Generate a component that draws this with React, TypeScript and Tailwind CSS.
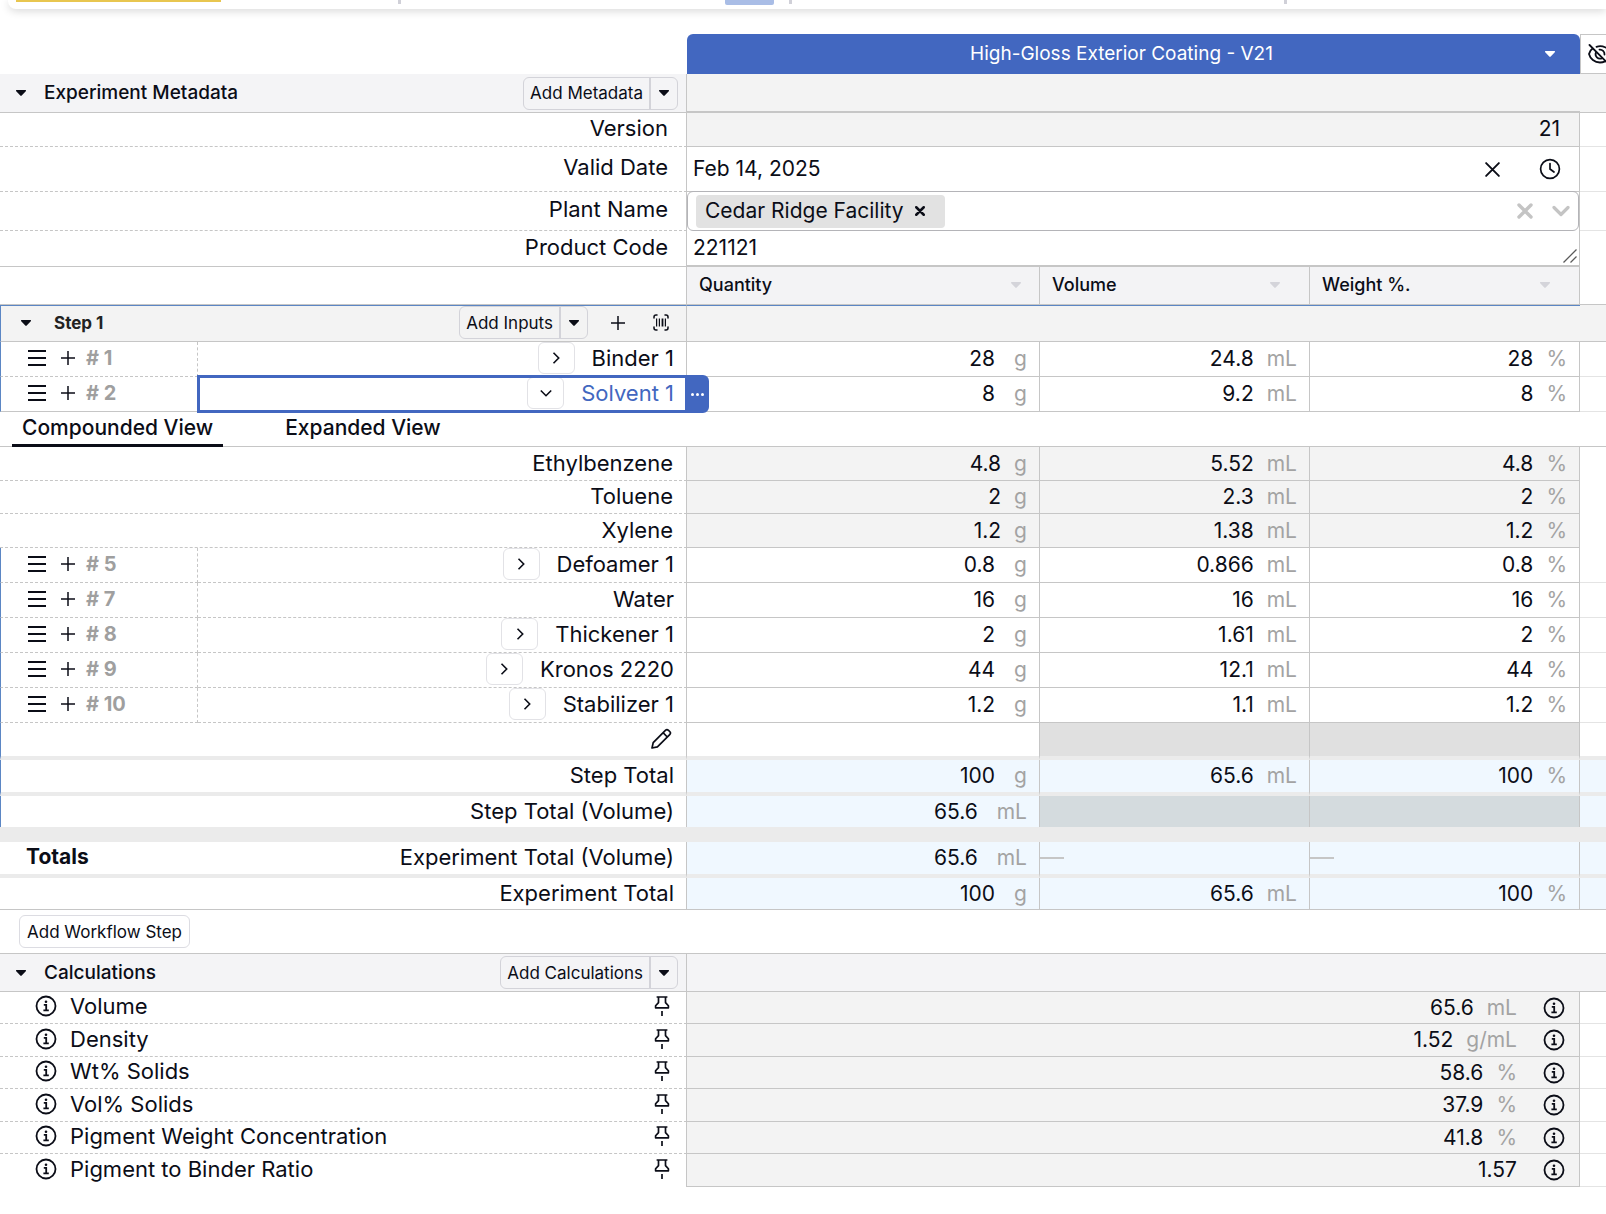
import React from 'react';
import clsx from 'clsx';

const LINE = 'border-[#c6c6c6]';
const FAINT = 'border-[#e4e4e4]';

const ingredients = [
  { no: 1, name: 'Binder 1', expandable: true, values: ['28', '24.8', '28'] },
  { no: 2, name: 'Solvent 1', selected: true, expandable: true, values: ['8', '9.2', '8'] },
  { no: 5, name: 'Defoamer 1', expandable: true, values: ['0.8', '0.866', '0.8'] },
  { no: 7, name: 'Water', expandable: false, values: ['16', '16', '16'] },
  { no: 8, name: 'Thickener 1', expandable: true, values: ['2', '1.61', '2'] },
  { no: 9, name: 'Kronos 2220', expandable: true, values: ['44', '12.1', '44'] },
  { no: 10, name: 'Stabilizer 1', expandable: true, values: ['1.2', '1.1', '1.2'] },
];

const components = [
  { name: 'Ethylbenzene', height: 'h-[34px]', values: ['4.8', '5.52', '4.8'] },
  { name: 'Toluene', height: 'h-[33px]', values: ['2', '2.3', '2'] },
  { name: 'Xylene', height: 'h-[34px]', values: ['1.2', '1.38', '1.2'] },
];

const calculations = [
  { name: 'Volume', value: '65.6', unit: 'mL', height: 'h-8' },
  { name: 'Density', value: '1.52', unit: 'g/mL', height: 'h-[33px]' },
  { name: 'Wt% Solids', value: '58.6', unit: '%', height: 'h-8' },
  { name: 'Vol% Solids', value: '37.9', unit: '%', height: 'h-[33px]' },
  { name: 'Pigment Weight Concentration', value: '41.8', unit: '%', height: 'h-8' },
  { name: 'Pigment to Binder Ratio', value: '1.57', unit: '', height: 'h-[33px]' },
];

/* Icons */

const Caret = ({ className = '' }: { className?: string }) => (
  <svg className={clsx('w-3 h-2 shrink-0', className)} viewBox="0 0 12 8" fill="currentColor" aria-hidden="true">
    <path d="M1.8 1h8.4c.8 0 1.1.7.6 1.2L6.7 6.6a1 1 0 0 1-1.4 0L1.2 2.2C.7 1.7 1 1 1.8 1z" />
  </svg>
);

const PlusIcon = () => (
  <svg className="size-[14px] shrink-0" viewBox="0 0 14 14" stroke="currentColor" strokeWidth="1.5" aria-hidden="true">
    <path d="M7 0v14M0 7h14" />
  </svg>
);

const MenuIcon = () => (
  <svg className="w-[18px] h-4 shrink-0" viewBox="0 0 18 16" stroke="currentColor" strokeWidth="2" aria-hidden="true">
    <path d="M0 1h18M0 8h18M0 15h18" />
  </svg>
);

const ScanIcon = () => (
  <svg className="w-4 h-[17px]" viewBox="0 0 16 17" fill="none" stroke="currentColor" strokeWidth="1.5" aria-hidden="true">
    <path d="M1 4V3a2 2 0 0 1 2-2h1M12 1h1a2 2 0 0 1 2 2v1M15 13v1a2 2 0 0 1-2 2h-1M4 16H3a2 2 0 0 1-2-2v-1" strokeLinecap="round" />
    <path d="M3.6 4.5v8M6.4 4.5v8M12.4 4.5v8" strokeWidth="1.2" />
    <path d="M9.5 4.5v8" strokeWidth="1.8" />
  </svg>
);

const InfoIcon = () => (
  <svg className="size-[22px]" viewBox="0 0 22 22" fill="none" stroke="currentColor" strokeWidth="1.8" aria-hidden="true">
    <circle cx="11" cy="11" r="9.5" />
    <path d="M8.8 9.8h2.4v5.4M8.4 15.3h5.4" />
    <circle cx="11" cy="6.7" r="1.3" fill="currentColor" stroke="none" />
  </svg>
);

const PinIcon = () => (
  <svg className="w-4 h-5" viewBox="0 0 16 20" fill="none" stroke="currentColor" strokeWidth="1.7" strokeLinejoin="round" aria-hidden="true">
    <path d="M2.6 1h10.8M4.5 1v5.6L1.6 9.8v2h12.8v-2l-2.9-3.2V1M8 15v5" />
  </svg>
);

const PencilIcon = () => (
  <svg className="size-[22px]" viewBox="0 0 22 22" fill="none" stroke="currentColor" strokeWidth="1.7" strokeLinejoin="round" aria-hidden="true">
    <path d="M2 20l1.2-5.4L15.4 2.3a2.2 2.2 0 0 1 3.1 0l1.2 1.2a2.2 2.2 0 0 1 0 3.1L7.4 18.8 2 20zM13 4.7L17.3 9" />
  </svg>
);

const CrossIcon = ({ className, width }: { className: string; width: number }) => (
  <svg className={className} viewBox="0 0 16 16" stroke="currentColor" strokeWidth={width} strokeLinecap="round" aria-hidden="true">
    <path d="M2 2l12 12M14 2L2 14" />
  </svg>
);

const ClockIcon = () => (
  <svg className="size-[22px]" viewBox="0 0 22 22" fill="none" stroke="currentColor" strokeWidth="1.7" strokeLinecap="round" aria-hidden="true">
    <circle cx="11" cy="11" r="9.4" />
    <path d="M11 5.5V11l4 3" />
  </svg>
);

const HiddenIcon = () => (
  <svg className="w-6 h-5 shrink-0" viewBox="0 0 24 20" fill="none" stroke="currentColor" strokeWidth="1.8" strokeLinecap="round" aria-hidden="true">
    <path d="M1.5 1l18 18" />
    <path d="M4.6 4.6C2.6 6 1.4 8 1 10c1.2 4.8 5.5 8.5 11 8.5 1.8 0 3.5-.4 5-1.1M8.5 2.8C14 .8 21 3.5 23 10c-.3 1.5-1.1 3-2.1 4.1" />
    <path d="M8 8.3a4.5 4.5 0 0 0 5.8 6M11.5 5.7a4.5 4.5 0 0 1 5 4.8" />
  </svg>
);

/* Shared pieces */

const Tail = ({ className = '' }: { className?: string }) => (
  <td className={clsx('border-b p-0', className || FAINT)} />
);

const SplitButton = ({ label }: { label: string }) => (
  <div className="flex h-[33px] rounded-md border border-[#d3d3d9] text-[17px] font-normal">
    <button type="button" className="px-1.5">{label}</button>
    <button type="button" aria-label={`${label} options`} className="flex w-7 items-center justify-center border-l-2 border-[#d3d3d9]">
      <Caret />
    </button>
  </div>
);

const Amount = ({ value, unit, wide = false }: { value: string; unit: string; wide?: boolean }) => (
  <div className={clsx('flex items-center justify-end pr-3', wide ? 'gap-[19px]' : 'gap-[13px]')}>
    <span>{value}</span>
    <span className="text-[#a3a3a3]">{unit}</span>
  </div>
);

const AmountCells = ({ values, className = '', tight = false }: { values: string[]; className?: string; tight?: boolean }) => (
  <>
    <td className={clsx('border-r p-0', className)}>
      <Amount value={values[0]} unit="g" wide={!tight} />
    </td>
    <td className={clsx('border-r p-0', className)}>
      <Amount value={values[1]} unit="mL" />
    </td>
    <td className={clsx('border-r p-0', className)}>
      <Amount value={values[2]} unit="%" />
    </td>
  </>
);

const IngredientRow = ({ item }: { item: (typeof ingredients)[number] }) => (
  <tr className="h-[35px]">
    <td
      className={clsx(
        'border-b border-l border-l-[#5b86c4] border-b-[#c6c6c6] p-0 pb-0.5',
        item.selected ? 'border-solid' : 'border-r border-r-[#c6c6c6] [border-bottom-style:dashed] [border-right-style:dashed]'
      )}
    >
      <div className="flex items-center pl-[27px]">
        <button type="button" aria-label="Move row"><MenuIcon /></button>
        <button type="button" aria-label="Add row" className="ml-[15px]"><PlusIcon /></button>
        <span className="ml-[11px] text-[20px] leading-6 font-bold text-[#9f9f9f]"># {item.no}</span>
      </div>
    </td>
    <th
      scope="row"
      className={clsx('relative border-r border-b p-0 pb-0.5 font-normal [border-bottom-style:dashed]', LINE)}
    >
      {item.selected && (
        <div className="absolute -top-0.5 -left-px -bottom-0.5 -right-[23px] flex justify-end rounded-r-md border-[3px] border-[#4267c0]">
          <button type="button" aria-label="Row actions" className="flex w-[21px] items-center justify-end gap-0.5 bg-[#4267c0] pr-0.5">
            <span className="size-[3px] rounded-full bg-white" />
            <span className="size-[3px] rounded-full bg-white" />
            <span className="size-[3px] rounded-full bg-white" />
          </button>
        </div>
      )}
      <div className={clsx('flex items-center justify-end gap-[17px] pr-3 text-[22px] leading-6', item.selected && 'text-[#4267c0]')}>
        {item.expandable && (
          <button
            type="button"
            aria-label={`Expand ${item.name}`}
            className="flex h-8 w-[37px] items-center justify-center rounded-md border border-[#e2e2e6] text-[#0b0d17]"
          >
            <svg
              className={clsx('w-3 h-3', item.selected && 'rotate-90')}
              viewBox="0 0 12 12"
              fill="none"
              stroke="currentColor"
              strokeWidth="1.6"
              aria-hidden="true"
            >
              <path d="M3.5.8L8.7 6l-5.2 5.2" />
            </svg>
          </button>
        )}
        <span>{item.name}</span>
      </div>
    </th>
    <AmountCells values={item.values} className={clsx('border-b', LINE)} />
    <Tail />
  </tr>
);

const SectionTitle = ({ title, action }: { title: string; action: string }) => (
  <div className="flex items-center pr-2 pl-[15px]">
    <button type="button" className="flex items-center gap-[17px] text-[19px] font-medium">
      <Caret />
      {title}
    </button>
    <div className="ml-auto">
      <SplitButton label={action} />
    </div>
  </div>
);

const columns = [
  { name: 'Quantity', pad: 'pr-[17px]' },
  { name: 'Volume', pad: 'pr-7' },
  { name: 'Weight %.', pad: 'pr-7' },
];

export default function App() {
  const labelText = 'text-right text-[22px] leading-6 font-normal';
  const labelCell = clsx('border-r border-b p-0 pr-[18px] pb-1', labelText, LINE);
  const stepCell = clsx('border-l border-l-[#5b86c4] border-r border-r-[#c6c6c6] p-0 pr-3 pb-0.5', labelText);
  const band = 'border-b-4 border-b-[#ebebeb]';

  return (
    <main className="overflow-hidden bg-white pb-7 font-[Inter,'Liberation_Sans',sans-serif] text-[21px] leading-6 text-[#0b0d17]">
      {/* Lower edge of the toolbar */}
      <div className="mb-[25px] ml-2 flex h-[9px] items-start rounded-bl-lg pl-2 shadow-[0_2px_8px_rgba(0,0,0,0.16)]">
        <div className="h-0.5 w-[205px] bg-[#e8c64f]" />
        <div className="ml-[177px] h-1 w-[3px] bg-[#d0d0d8]" />
        <div className="ml-[324px] h-[5px] w-[49px] rounded-b-xs bg-[#a9bde6]" />
        <div className="ml-[15px] h-1 w-[3px] bg-[#d0d0d8]" />
        <div className="ml-[492px] h-1 w-[3px] bg-[#d0d0d8]" />
      </div>

      <table className="w-full table-fixed border-separate border-spacing-0">
        <colgroup>
          <col className="w-[198px]" />
          <col className="w-[489px]" />
          <col className="w-[353px]" />
          <col className="w-[270px]" />
          <col className="w-[270px]" />
          <col className="w-[26px]" />
        </colgroup>
        <thead>
          <tr className="h-10">
            <td colSpan={2} className="p-0" />
            <th colSpan={3} className="rounded-t-md bg-[#4267c0] p-0 font-normal text-white">
              <button type="button" className="flex w-full items-center pr-6 pl-3 text-[19px]">
                <span className="flex-1">High-Gloss Exterior Coating - V21</span>
                <Caret />
              </button>
            </th>
            <td className={clsx('overflow-hidden border border-r-0 p-0 pl-[7px]', LINE)}>
              <button type="button" aria-label="Hide column" className="flex">
                <HiddenIcon />
              </button>
            </td>
          </tr>
        </thead>
        <tbody>
          <tr className="h-[39px]">
            <th colSpan={2} className={clsx('border-r border-b bg-[#f4f4f6] p-0', LINE)}>
              <SectionTitle title="Experiment Metadata" action="Add Metadata" />
            </th>
            <td colSpan={3} className={clsx('border-b-2 bg-[#f3f3f3] p-0', LINE)} />
            <td className={clsx('border-b bg-[#f3f3f3] p-0', LINE)} />
          </tr>
          <tr className="h-[34px]">
            <th scope="row" colSpan={2} className={clsx(labelCell, '[border-bottom-style:dashed]')}>Version</th>
            <td colSpan={3} className={clsx('border-r border-b bg-[#f3f3f3] p-0 pr-[19px] pb-0.5 text-right', LINE)}>21</td>
            <Tail />
          </tr>
          <tr className="h-[45px]">
            <th scope="row" colSpan={2} className={clsx(labelCell, '[border-bottom-style:dashed]')}>
              <label htmlFor="valid-date">Valid Date</label>
            </th>
            <td colSpan={3} className={clsx('border-r border-b p-0', LINE)}>
              <div className="flex items-center pr-[18px] pl-1.5">
                <input id="valid-date" type="text" defaultValue="Feb 14, 2025" className="min-w-0 flex-1 outline-none" />
                <button type="button" aria-label="Clear date" className="mr-[38px]">
                  <CrossIcon className="size-[17px]" width={1.8} />
                </button>
                <button type="button" aria-label="Pick date"><ClockIcon /></button>
              </div>
            </td>
            <Tail />
          </tr>
          <tr className="h-[39px]">
            <th scope="row" colSpan={2} className={clsx(labelCell, '[border-bottom-style:dashed]')}>
              <label htmlFor="plant-name">Plant Name</label>
            </th>
            <td colSpan={3} className={clsx('border-r p-0', LINE)}>
              <div className="-mt-px flex h-10 items-center rounded-md border border-[#b4b4b8] pr-2 pl-2">
                <span className="flex h-[33px] items-center rounded-sm bg-[#e2e2e2] pr-5 pl-[9px]">
                  Cedar Ridge Facility
                  <button type="button" aria-label="Remove Cedar Ridge Facility" className="ml-[11px]">
                    <CrossIcon className="size-[10px]" width={4} />
                  </button>
                </span>
                <input id="plant-name" type="text" className="min-w-0 flex-1 outline-none" />
                <button type="button" aria-label="Clear plants" className="mr-[19px] text-[#c4c4c4]">
                  <CrossIcon className="size-4" width={3.4} />
                </button>
                <button type="button" aria-label="Show plants" className="text-[#c4c4c4]">
                  <svg className="w-[18px] h-3" viewBox="0 0 18 12" fill="none" stroke="currentColor" strokeWidth="3.2" strokeLinecap="round" strokeLinejoin="round" aria-hidden="true">
                    <path d="M2 2.5l7 7 7-7" />
                  </svg>
                </button>
              </div>
            </td>
            <Tail />
          </tr>
          <tr className="h-9">
            <th scope="row" colSpan={2} className={labelCell}>
              <label htmlFor="product-code">Product Code</label>
            </th>
            <td colSpan={3} className={clsx('relative border-r border-b-2 p-0', LINE)}>
              <textarea id="product-code" rows={1} defaultValue="221121" className="block h-6 w-full resize-none overflow-hidden pl-1.5 outline-none" />
              <svg className="absolute right-0.5 bottom-0.5 size-[14px] text-[#5a5a5a]" viewBox="0 0 14 14" stroke="currentColor" strokeWidth="1.3" aria-hidden="true">
                <path d="M.5 13.5L13.5.5M7.5 13.5l6-6" />
              </svg>
            </td>
            <td className="p-0" />
          </tr>
          <tr className="h-[38px]">
            <td colSpan={2} className={clsx('border-r border-b p-0', LINE)} />
            {columns.map((col) => (
              <th key={col.name} scope="col" className={clsx('border-r border-b bg-[#f3f3f5] p-0 pb-0.5 font-medium', LINE)}>
                <div className={clsx('flex items-center justify-between pl-3 text-[18px]', col.pad)}>
                  {col.name}
                  <Caret className="text-[#d4d4da]" />
                </div>
              </th>
            ))}
            <Tail className={LINE} />
          </tr>

          {/* Step 1 */}
          <tr className="h-[37px]">
            <th colSpan={2} className="border-t border-r border-b border-l border-t-[#5b86c4] border-r-[#c6c6c6] border-b-[#c6c6c6] border-l-[#5b86c4] bg-[#f3f3f3] p-0 pb-0.5">
              <div className="flex items-center pr-[17px] pl-[19px]">
                <button type="button" className="flex items-center gap-[22px] text-[17px] font-bold text-[#222]">
                  <Caret className="text-[#0b0d17]" />
                  Step 1
                </button>
                <div className="ml-auto">
                  <SplitButton label="Add Inputs" />
                </div>
                <button type="button" aria-label="Add input" className="ml-[23px]"><PlusIcon /></button>
                <button type="button" aria-label="Scan barcode" className="ml-7"><ScanIcon /></button>
              </div>
            </th>
            <td colSpan={3} className="border-t border-b border-t-[#5b86c4] border-b-[#c6c6c6] bg-[#f3f3f3] p-0" />
            <Tail className={clsx('bg-[#f3f3f3]', LINE)} />
          </tr>
          {ingredients.slice(0, 2).map((item) => (
            <IngredientRow key={item.no} item={item} />
          ))}
          <tr className="h-[35px]">
            <td colSpan={6} className={clsx('border-b p-0', LINE)}>
              <div role="tablist" className="flex h-[34px] gap-[52px] pl-3 font-medium">
                <button type="button" role="tab" aria-selected="true" className="-mb-px border-b-[3px] border-[#0b0d17] px-[10px]">
                  Compounded View
                </button>
                <button type="button" role="tab" aria-selected="false" className="-mb-px border-b-[3px] border-transparent px-[10px]">
                  Expanded View
                </button>
              </div>
            </td>
          </tr>
          {components.map((item) => (
            <tr key={item.name} className={item.height}>
              <th scope="row" colSpan={2} className={clsx('border-r border-b p-0 pr-[13px] pb-0.5 [border-bottom-style:dashed]', labelText, LINE)}>
                {item.name}
              </th>
              <AmountCells values={item.values} className={clsx('border-b bg-[#f3f3f3]', LINE)} tight />
              <td className="p-0" />
            </tr>
          ))}
          {ingredients.slice(2).map((item) => (
            <IngredientRow key={item.no} item={item} />
          ))}
          <tr className="h-[37px]">
            <td colSpan={2} className={clsx(stepCell, band)}>
              <button type="button" aria-label="Add ingredient" className="mr-0.5 ml-auto flex"><PencilIcon /></button>
            </td>
            <td className={clsx('border-r border-r-[#c6c6c6] p-0', band)} />
            <td className={clsx('border-r border-r-[#c6c6c6] bg-[#e0e0e0] p-0', band)} />
            <td className={clsx('border-r border-r-[#c6c6c6] bg-[#e0e0e0] p-0', band)} />
            <td className={clsx('p-0', band)} />
          </tr>
          <tr className="h-9">
            <th scope="row" colSpan={2} className={clsx(stepCell, band)}>Step Total</th>
            <AmountCells values={['100', '65.6', '100']} className={clsx('border-r-[#c6c6c6] bg-[#f0f8ff]', band)} />
            <td className={clsx('bg-[#f0f8ff] p-0', band)} />
          </tr>
          <tr className="h-[31px]">
            <th scope="row" colSpan={2} className={stepCell}>Step Total (Volume)</th>
            <td className="border-r border-r-[#c6c6c6] bg-[#f0f8ff] p-0">
              <Amount value="65.6" unit="mL" wide />
            </td>
            <td className="border-r border-r-[#c6c6c6] bg-[#d4dbde] p-0" />
            <td className="border-r border-r-[#c6c6c6] bg-[#d4dbde] p-0" />
            <td className="bg-[#f0f8ff] p-0" />
          </tr>
          <tr className="h-[15px]">
            <td colSpan={6} className="bg-[#ebebeb] p-0" />
          </tr>

          {/* Totals */}
          <tr className="h-9">
            <th scope="row" colSpan={2} className={clsx('border-r border-r-[#c6c6c6] p-0 pb-0.5 font-normal', band)}>
              <div className="flex justify-between pr-3 pl-[26px]">
                <span className="font-bold">Totals</span>
                <span className="text-[22px] leading-6">Experiment Total (Volume)</span>
              </div>
            </th>
            <td className={clsx('border-r border-r-[#c6c6c6] bg-[#f0f8ff] p-0', band)}>
              <Amount value="65.6" unit="mL" wide />
            </td>
            <td className={clsx('border-r border-r-[#c6c6c6] bg-[#f0f8ff] p-0', band)}>
              <div className="h-0.5 w-6 bg-[#c6c6c6]" />
            </td>
            <td className={clsx('border-r border-r-[#c6c6c6] bg-[#f0f8ff] p-0', band)}>
              <div className="h-0.5 w-6 bg-[#c6c6c6]" />
            </td>
            <td className={clsx('bg-[#f0f8ff] p-0', band)} />
          </tr>
          <tr className="h-8">
            <th scope="row" colSpan={2} className={clsx('border-r border-b p-0 pr-3 pb-0.5', labelText, LINE)}>Experiment Total</th>
            <AmountCells values={['100', '65.6', '100']} className={clsx('border-b bg-[#f0f8ff]', LINE)} />
            <Tail className={clsx('bg-[#f0f8ff]', LINE)} />
          </tr>
          <tr className="h-11">
            <td colSpan={6} className={clsx('border-b p-0 pl-[19px]', LINE)}>
              <button type="button" className="block h-[33px] rounded-md border border-[#dcdce2] px-[7px] text-[17px]">
                Add Workflow Step
              </button>
            </td>
          </tr>

          {/* Calculations */}
          <tr className="h-[38px]">
            <th colSpan={2} className={clsx('border-r border-b bg-[#f4f4f6] p-0', LINE)}>
              <SectionTitle title="Calculations" action="Add Calculations" />
            </th>
            <td colSpan={4} className={clsx('border-b bg-[#f4f4f6] p-0', LINE)} />
          </tr>
          {calculations.map((calc, idx) => (
            <tr key={calc.name} className={calc.height}>
              <th
                scope="row"
                colSpan={2}
                className={clsx(
                  'border-r p-0 pb-[3px] text-[22px] leading-6 font-normal',
                  LINE,
                  idx < calculations.length - 1 && 'border-b [border-bottom-style:dashed]'
                )}
              >
                <div className="flex items-center pr-4 pl-[35px]">
                  <button type="button" aria-label={`About ${calc.name}`}><InfoIcon /></button>
                  <span className="ml-[13px]">{calc.name}</span>
                  <button type="button" aria-label={`Pin ${calc.name}`} className="ml-auto"><PinIcon /></button>
                </div>
              </th>
              <td colSpan={3} className={clsx('border-r border-b bg-[#f3f3f3] p-0', LINE)}>
                <div className="flex items-center justify-end pr-[14px]">
                  <span>{calc.value}</span>
                  {calc.unit && <span className="ml-[13px] text-[#a3a3a3]">{calc.unit}</span>}
                  <button type="button" aria-label={`${calc.name} details`} className="ml-[26px]"><InfoIcon /></button>
                </div>
              </td>
              <Tail />
            </tr>
          ))}
        </tbody>
      </table>
    </main>
  );
}
